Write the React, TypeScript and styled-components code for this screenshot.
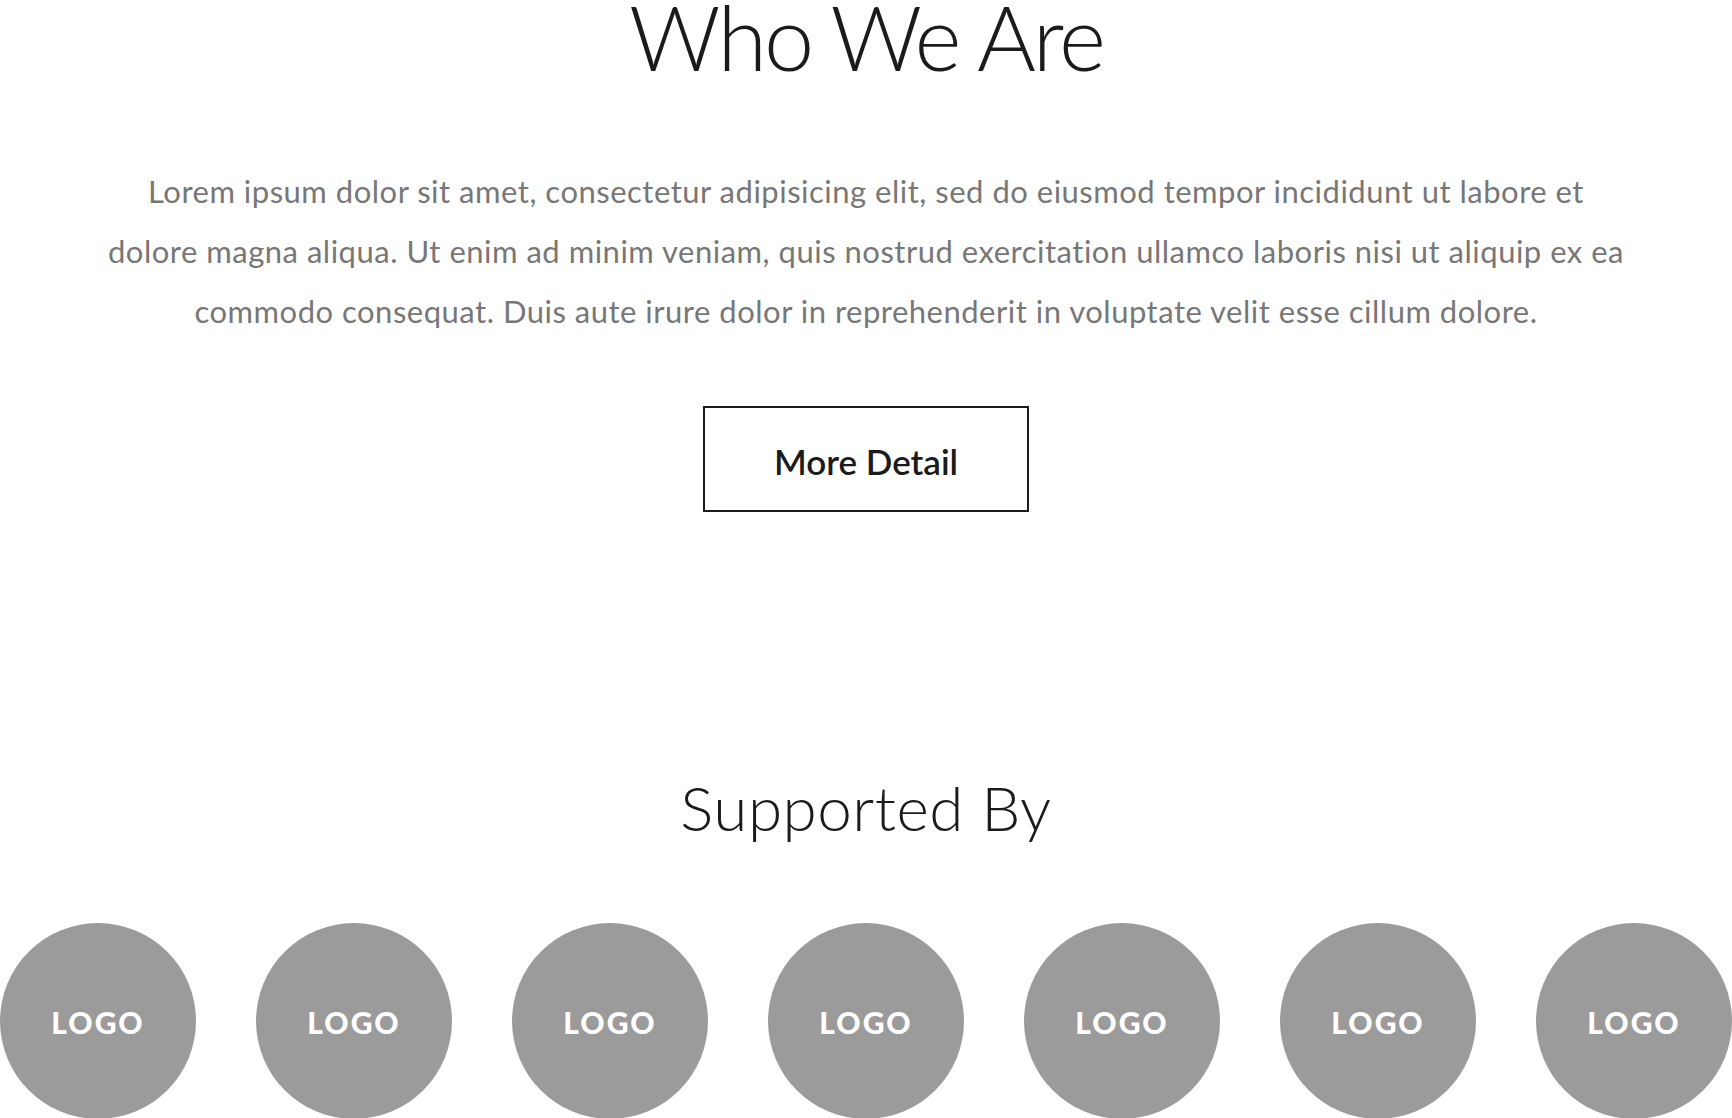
import styled, { createGlobalStyle } from "styled-components";

const GlobalStyle = createGlobalStyle`
  html, body {
    margin: 0;
    padding: 0;
    background: #ffffff;
    overflow: hidden;
  }
  * {
    box-sizing: border-box;
  }
`;

const Page = styled.main`
  width: 100%;
  display: flex;
  flex-direction: column;
  align-items: center;
  font-family: "Lato", "Open Sans", sans-serif;
`;

const AboutSection = styled.section`
  display: flex;
  flex-direction: column;
  align-items: center;
  width: 100%;
`;

const Title = styled.h1`
  margin: -9px 0 0;
  font-size: 90px;
  line-height: 90px;
  font-weight: 300;
  letter-spacing: -3px;
  color: #1b1b1b;
  text-align: center;
`;

const Intro = styled.p`
  margin: 80px 0 0;
  font-size: 31px;
  line-height: 60px;
  font-weight: 400;
  letter-spacing: 0.5px;
  color: #777777;
  text-align: center;
`;

const OutlineButton = styled.button`
  margin-top: 65px;
  width: 326px;
  height: 106px;
  border: 2px solid #1b1b1b;
  background: transparent;
  display: flex;
  align-items: center;
  justify-content: center;
  padding: 3px 0 0;
  font-family: inherit;
  font-size: 35px;
  font-weight: 600;
  color: #1b1b1b;
  cursor: pointer;
`;

const SupportersSection = styled.section`
  margin-top: 265px;
  width: 100%;
  display: flex;
  flex-direction: column;
  align-items: center;
`;

const SubTitle = styled.h2`
  margin: 0;
  font-size: 62px;
  line-height: 61px;
  font-weight: 300;
  letter-spacing: 0.5px;
  color: #1b1b1b;
`;

const LogoRow = styled.div`
  margin-top: 85px;
  width: 100%;
  display: flex;
  justify-content: center;
  gap: 60px;
`;

const LogoBadge = styled.div`
  flex: 0 0 196px;
  width: 196px;
  height: 196px;
  border-radius: 50%;
  background: #9b9b9b;
  display: flex;
  align-items: center;
  justify-content: center;
  padding-top: 2px;
  color: #ffffff;
  font-size: 30px;
  font-weight: 900;
  letter-spacing: 2px;
`;

const lines = [
  "Lorem ipsum dolor sit amet, consectetur adipisicing elit, sed do eiusmod tempor incididunt ut labore et",
  "dolore magna aliqua. Ut enim ad minim veniam, quis nostrud exercitation ullamco laboris nisi ut aliquip ex ea",
  "commodo consequat. Duis aute irure dolor in reprehenderit in voluptate velit esse cillum dolore.",
];

export default function App() {
  return (
    <Page>
      <GlobalStyle />
      <AboutSection>
        <Title>Who We Are</Title>
        <Intro>
          {lines.map((line, i) => (
            <span key={i}>
              {line}
              {i < lines.length - 1 && <br />}
            </span>
          ))}
        </Intro>
        <OutlineButton>More Detail</OutlineButton>
      </AboutSection>
      <SupportersSection>
        <SubTitle>Supported By</SubTitle>
        <LogoRow>
          {Array.from({ length: 7 }).map((_, i) => (
            <LogoBadge key={i}>LOGO</LogoBadge>
          ))}
        </LogoRow>
      </SupportersSection>
    </Page>
  );
}
